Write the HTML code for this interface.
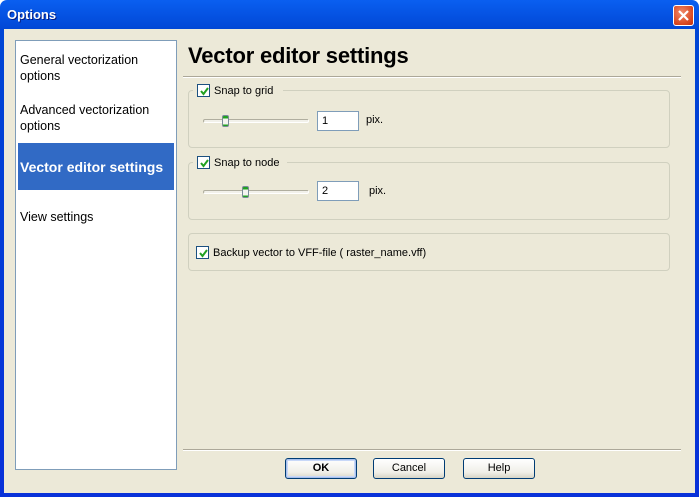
<!DOCTYPE html>
<html><head><meta charset="utf-8"><style>
*{margin:0;padding:0;box-sizing:border-box}
body{width:699px;height:497px;overflow:hidden;font-family:"Liberation Sans",sans-serif;font-size:12px;color:#000}
.win{position:absolute;left:0;top:0;width:699px;height:497px;background:linear-gradient(#0a5ff0,#0046d5 30px,#0831d9);border-radius:7px 7px 0 0}
.title{position:absolute;left:7px;top:7px;color:#fff;font-weight:bold;font-size:13px;text-shadow:1px 1px #0a1f80}
.close{position:absolute;left:673px;top:5px;width:21px;height:21px;border:1px solid #fff;border-radius:3px;background:radial-gradient(circle at 40% 35%,#f08a6a,#d8461f 70%,#c03010)}
.client{position:absolute;left:4px;top:29px;width:691px;height:464px;background:#ece9d8}
.abs{position:absolute}
.list{left:15px;top:40px;width:162px;height:430px;background:#fff;border:1px solid #7f9db9}
.item{position:absolute;left:20px;font-size:12.5px;line-height:16px}
.sel{position:absolute;left:18px;top:143px;width:156px;height:47px;background:#316ac5}
.group{position:absolute;left:188px;width:482px;border:1px solid #d0d0bf;border-radius:4px}
.cb{position:absolute;width:13px;height:13px;border:1px solid #1c5180;background:#fff}
.cb svg{position:absolute;left:1px;top:1px}
.lbl{position:absolute;background:#ece9d8;padding:0 3px;font-size:11px}
.track{position:absolute;width:106px;height:4px;border:1px solid #b0ae9f;border-bottom-color:#fff;border-right-color:#fff;background:#f2f1ea;border-radius:2px}
.thumb{position:absolute;width:7px;height:12px;border:1px solid #7a8a99;border-radius:2px;background:linear-gradient(#21a121 0,#21a121 2px,#f4f4f0 3px,#f4f4f0 8px,#21a121 9px)}
.edit{position:absolute;width:42px;height:20px;border:1px solid #7f9db9;background:#fff;padding:3px 4px;font-size:11px}
.btn{position:absolute;top:458px;width:72px;height:21px;border:1px solid #003c74;border-radius:3px;background:linear-gradient(#fff,#f0efe8 70%,#d8d5c6);text-align:center;font-size:11px;line-height:19px}
</style></head><body>
<div class="win">
<div class="title">Options</div>
<div class="close"><svg width="19" height="19" viewBox="0 0 19 19"><path d="M5 5L14 14M14 5L5 14" stroke="#fff" stroke-width="2.2"/></svg></div>
<div class="client"></div>
</div>
<div class="abs list"></div>
<div class="item" style="top:52px">General vectorization<br>options</div>
<div class="item" style="top:102px">Advanced vectorization<br>options</div>
<div class="sel"></div>
<div class="item" style="top:159px;color:#fff;font-weight:bold;font-size:14px">Vector editor settings</div>
<div class="item" style="top:209px">View settings</div>

<div class="abs" style="left:188px;top:43px;font-size:22px;font-weight:bold;letter-spacing:-0.2px">Vector editor settings</div>
<div class="abs" style="left:183px;top:76px;width:498px;height:2px;border-top:1px solid #aca899;border-bottom:1px solid #fff"></div>

<div class="group" style="top:90px;height:58px"></div>
<div class="lbl" style="left:193px;top:84px;padding-left:4px;width:90px">&nbsp;</div>
<div class="cb" style="left:197px;top:84px"><svg width="11" height="11"><path d="M2 5L4.5 8L9 2" stroke="#21a121" stroke-width="2" fill="none"/></svg></div>
<div class="abs" style="left:214px;top:85px;font-size:11px">Snap to grid</div>
<div class="track" style="left:203px;top:119px"></div>
<div class="thumb" style="left:222px;top:115px"></div>
<div class="edit" style="left:317px;top:111px">1</div>
<div class="abs" style="left:366px;top:114px;font-size:11px">pix.</div>

<div class="group" style="top:162px;height:58px"></div>
<div class="lbl" style="left:193px;top:156px;width:94px">&nbsp;</div>
<div class="cb" style="left:197px;top:156px"><svg width="11" height="11"><path d="M2 5L4.5 8L9 2" stroke="#21a121" stroke-width="2" fill="none"/></svg></div>
<div class="abs" style="left:214px;top:157px;font-size:11px">Snap to node</div>
<div class="track" style="left:203px;top:190px"></div>
<div class="thumb" style="left:242px;top:186px"></div>
<div class="edit" style="left:317px;top:181px">2</div>
<div class="abs" style="left:369px;top:185px;font-size:11px">pix.</div>

<div class="group" style="top:233px;height:38px"></div>
<div class="cb" style="left:196px;top:246px"><svg width="11" height="11"><path d="M2 5L4.5 8L9 2" stroke="#21a121" stroke-width="2" fill="none"/></svg></div>
<div class="abs" style="left:213px;top:247px;font-size:11px">Backup vector to VFF-file ( raster_name.vff)</div>

<div class="abs" style="left:183px;top:449px;width:498px;height:2px;border-top:1px solid #aca899;border-bottom:1px solid #fff"></div>
<div class="btn" style="left:285px;font-weight:bold;box-shadow:inset 0 0 0 1px #a8c0ec,inset 0 0 0 2px #c8d8f8">OK</div>
<div class="btn" style="left:373px">Cancel</div>
<div class="btn" style="left:463px">Help</div>
</body></html>
